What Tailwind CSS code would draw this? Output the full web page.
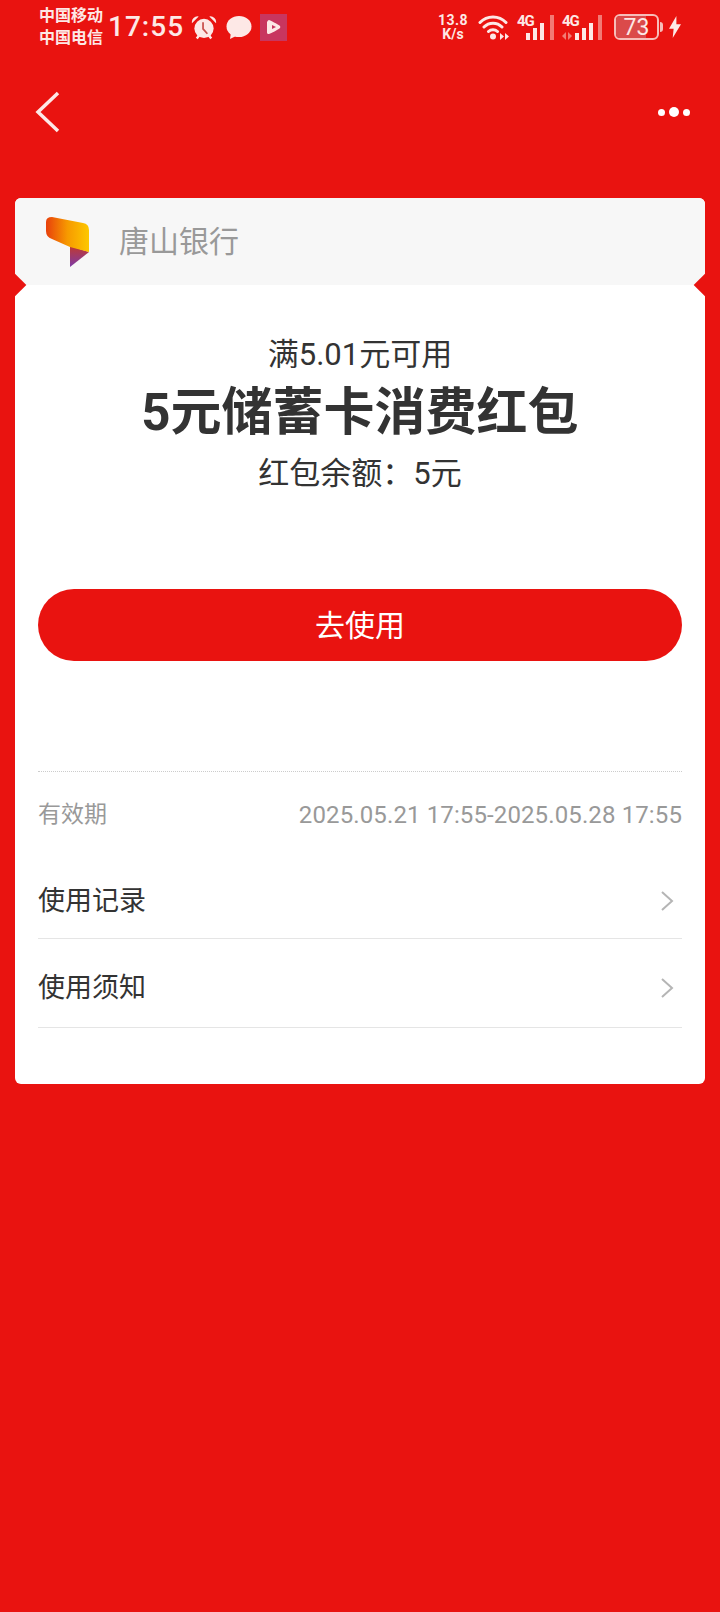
<!DOCTYPE html>
<html lang="zh-CN">
<head>
    <meta charset="UTF-8">
    <meta name="viewport" content="width=device-width, initial-scale=1.0">
    <title>红包详情</title>
    <script src="https://cdn.jsdelivr.net/npm/@tailwindcss/browser@4"></script>
</head>
<body class="bg-[#e91310] w-[720px] h-[1612px] overflow-hidden font-['Roboto','Noto_Sans_CJK_SC',sans-serif]">

    <!-- status bar -->
    <div class="h-[54px] pl-[39px] pr-[39px] flex items-center justify-between text-[#fde8e6]">
        <div class="flex items-center">
            <div class="w-[66px] text-[16px] leading-[22px] font-bold">
                <div>中国移动</div>
                <div>中国电信</div>
            </div>
            <span class="ml-[3px] text-[28px] font-medium tracking-[1px] leading-none">17:55</span>
            <svg class="ml-[7px]" width="26" height="27" viewBox="0 0 27 27">
                <circle cx="13.5" cy="14.5" r="10" fill="#fde8e6"/>
                <path d="M12.5 8v7l4.500 5" fill="none" stroke="#c8504c" stroke-width="1.800"/>
                <path d="M1 9a6 6 0 0 1 7-7zM26 9a6 6 0 0 0-7-7z" fill="#fde8e6"/>
                <path d="M6 25l2.500-3.500M21 25l-2.500-3.500" stroke="#fde8e6" stroke-width="2.500"/>
            </svg>
            <svg class="ml-[8px]" width="27" height="27" viewBox="0 0 27 27">
                <ellipse cx="14" cy="12.5" rx="12.5" ry="10.5" fill="#fde8e6"/>
                <path d="M6 18l-1 7 8-4z" fill="#fde8e6"/>
            </svg>
            <div class="ml-[8px] w-[27px] h-[27px] bg-[#c8365f] flex items-center justify-center">
                <svg width="17" height="18" viewBox="0 0 17 18">
                    <path d="M3 2.500a1.500 1.500 0 0 1 1-.5c1 0 9 4.500 10.500 5.500a1.800 1.800 0 0 1 0 3C13 11.500 5 16 4 16a1.500 1.500 0 0 1-2-1.500V4z" fill="#fde8e6"/>
                    <path d="M7 7l4 2-4 2z" fill="#c8365f"/>
                </svg>
            </div>
        </div>
        <div class="flex items-center">
            <div class="w-[34px] text-center text-[14px] leading-[14px] font-bold">
                <div class="tracking-[0.5px]">13.8</div>
                <div>K/s</div>
            </div>
            <svg class="ml-[8px]" width="32" height="26" viewBox="0 0 32 26">
                <path d="M2 8.500a18 18 0 0 1 26 0M6 13a12.500 12.500 0 0 1 18 0M10.500 17.500a6.500 6.500 0 0 1 9 0" fill="none" stroke="#fde8e6" stroke-width="3" stroke-linecap="round"/>
                <circle cx="15" cy="22.500" r="3" fill="#fde8e6"/>
                <path d="M22 19l4 3.500-4 3.500zM27 19l4 3.500-4 3.500z" fill="#fde8e6"/>
            </svg>
            <div class="ml-[7px] relative w-[38px] h-[26px]">
                <span class="absolute left-0 top-0 text-[15px] font-bold tracking-[-1px] leading-[14px]">4G</span>
                <svg class="absolute inset-0" width="38" height="26" viewBox="0 0 38 26">
                    <rect x="9" y="19" width="4" height="7" fill="#fde8e6"/>
                    <rect x="16" y="14" width="4" height="12" fill="#fde8e6"/>
                    <rect x="23" y="9" width="4" height="17" fill="#fde8e6"/>
                    <rect x="33" y="1" width="4" height="25" fill="#f27a75"/>
                </svg>
            </div>
            <div class="ml-[7px] relative w-[41px] h-[26px]">
                <span class="absolute left-0 top-0 text-[15px] font-bold tracking-[-1px] leading-[14px]">4G</span>
                <svg class="absolute inset-0" width="41" height="26" viewBox="0 0 41 26">
                    <path d="M4 18l-4 4 4 4zM6 18l4 4-4 4z" fill="#f27a75"/>
                    <rect x="13" y="19" width="4" height="7" fill="#fde8e6"/>
                    <rect x="20" y="14" width="4" height="12" fill="#fde8e6"/>
                    <rect x="27" y="9" width="4" height="17" fill="#fde8e6"/>
                    <rect x="36" y="1" width="4" height="25" fill="#f27a75"/>
                </svg>
            </div>
            <div class="ml-[11px] w-[45px] h-[26px] border-2 border-[#f7bdb9] rounded-[6px] overflow-hidden relative flex items-center justify-center">
                <div class="absolute left-0 inset-y-0 w-[73%] bg-[#db4a4a]"></div>
                <span class="relative text-[23px] leading-none">73</span>
            </div>
            <div class="w-[3px] h-[10px] bg-[#f7bdb9] rounded-r-sm ml-[1px]"></div>
            <svg class="ml-[6px]" width="12" height="24" viewBox="0 0 13 24">
                <path d="M8 0L0 14h5l-1 10 9-15H8z" fill="#fde8e6"/>
            </svg>
        </div>
    </div>

    <!-- nav bar -->
    <div class="h-[144px] pb-[28px] pl-[35px] pr-[30px] flex items-center justify-between">
        <svg width="26" height="42" viewBox="0 0 26 42">
            <path d="M23 2L3 21l20 19" fill="none" stroke="#fde8e6" stroke-width="3.500"/>
        </svg>
        <div class="flex items-center gap-[4px]">
            <div class="w-[7px] h-[7px] rounded-full bg-white"></div>
            <div class="w-[10px] h-[10px] rounded-full bg-white"></div>
            <div class="w-[7px] h-[7px] rounded-full bg-white"></div>
        </div>
    </div>

    <!-- card -->
    <div class="relative mx-[15px] h-[886px] rounded-[6px] bg-white overflow-hidden">
        <div class="h-[87px] bg-[#f7f7f7] flex items-center pl-[31px]">
            <svg width="43" height="50" viewBox="0 0 43 50">
                <defs>
                    <linearGradient id="logoTop" x1="0" y1="0" x2="1" y2="0">
                        <stop offset="0" stop-color="#e8400c"/>
                        <stop offset="0.5" stop-color="#f79a00"/>
                        <stop offset="1" stop-color="#fdc800"/>
                    </linearGradient>
                    <linearGradient id="logoBottom" x1="0" y1="0" x2="0" y2="1">
                        <stop offset="0" stop-color="#c0392f"/>
                        <stop offset="1" stop-color="#7e3aa8"/>
                    </linearGradient>
                </defs>
                <path d="M24 29L43 35 24 50z" fill="url(#logoBottom)"/>
                <path d="M6 0L37 6q6 1 6 7v22L24 30 6 22q-6-2-6-8V5q0-5 6-5z" fill="url(#logoTop)"/>
            </svg>
            <span class="ml-[30px] text-[30px] text-[#999]">唐山银行</span>
        </div>

        <div class="pt-[52px] flex flex-col items-center text-[#333]">
            <div class="text-[31px] leading-[36px] h-[36px]">满5.01元可用</div>
            <div class="mt-[10px] text-[51px] leading-[60px] font-bold">5元储蓄卡消费红包</div>
            <div class="mt-[13px] text-[31px] leading-[36px]">红包余额：5元</div>
        </div>

        <div class="px-[23px] mt-[97px]">
            <div class="h-[72px] rounded-full bg-[#e91310] text-white text-[30px] flex items-center justify-center">去使用</div>
            <div class="mt-[110px] border-t border-dotted border-[#ccc]"></div>
            <div class="mt-[27px] flex items-center justify-between text-[24px] leading-[32px] text-[#999]">
                <span class="text-[23px]">有效期</span>
                <span class="tracking-[0.12px]">2025.05.21 17:55-2025.05.28 17:55</span>
            </div>
            <div class="mt-[17px] h-[91px] border-b border-[#e5e5e5] pt-[16px] flex items-center justify-between text-[27px] text-[#333]">
                <span>使用记录</span>
                <svg class="mr-[8px]" width="14" height="22" viewBox="0 0 14 22"><path d="M2 2l10 9-10 9" fill="none" stroke="#b5b5b5" stroke-width="2"/></svg>
            </div>
            <div class="h-[89px] border-b border-[#e5e5e5] pt-[10px] flex items-center justify-between text-[27px] text-[#333]">
                <span>使用须知</span>
                <svg class="mr-[8px]" width="14" height="22" viewBox="0 0 14 22"><path d="M2 2l10 9-10 9" fill="none" stroke="#b5b5b5" stroke-width="2"/></svg>
            </div>
        </div>

        <!-- ticket notches -->
        <div class="absolute left-[-8px] top-[79px] w-[16px] h-[16px] rotate-45 bg-[#e91310]"></div>
        <div class="absolute right-[-8px] top-[79px] w-[16px] h-[16px] rotate-45 bg-[#e91310]"></div>
    </div>

</body>
</html>
